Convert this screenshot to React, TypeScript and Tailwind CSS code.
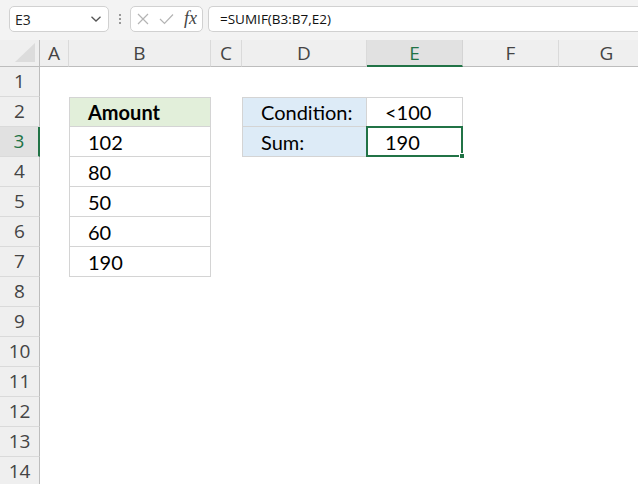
import React from 'react';

const COLS = ['A', 'B', 'C', 'D', 'E', 'F', 'G'];
const ROWS = Array.from({ length: 14 }, (_, i) => i + 1);

type Cell = { text?: string; cls?: string; bold?: boolean; selected?: boolean };

const LINE = 'border-[#d4d4d4]';

// only the cells that hold something or carry a border
const cells: Record<string, Cell> = {
  B2: { text: 'Amount', bold: true, cls: `bg-[#e2efda] border ${LINE}` },
  B3: { text: '102', cls: `border-x border-b ${LINE}` },
  B4: { text: '80', cls: `border-x border-b ${LINE}` },
  B5: { text: '50', cls: `border-x border-b ${LINE}` },
  B6: { text: '60', cls: `border-x border-b ${LINE}` },
  B7: { text: '190', cls: `border-x border-b ${LINE}` },
  D2: { text: 'Condition:', cls: `bg-[#ddebf7] border ${LINE}` },
  E2: { text: '<100', cls: `border-y border-r ${LINE}` },
  D3: { text: 'Sum:', cls: `bg-[#ddebf7] border-x border-b ${LINE}` },
  E3: { text: '190', cls: `border-r border-b ${LINE}`, selected: true },
};

const NameBox = () => (
  <div className="w-[100px] h-[26px] bg-white border border-[#d1d1d1] rounded-[5px] flex items-center justify-between pl-[5px] pr-[6px]">
    <span className="text-[14px] text-[#222]">E3</span>
    <svg width="12" height="8" viewBox="0 0 12 8" fill="none" stroke="#555" strokeWidth="1.3">
      <path d="M1.5 1.8 L6 6 L10.5 1.8" />
    </svg>
  </div>
);

const FxBox = () => (
  <div className="w-[73px] h-[26px] bg-white border border-[#d1d1d1] rounded-[5px] flex items-center pl-[6px] gap-[10px]">
    <svg width="12" height="12" viewBox="0 0 12 12" stroke="#b4b4b4" strokeWidth="1.2">
      <path d="M1 1 L11 11 M11 1 L1 11" />
    </svg>
    <svg width="15" height="12" viewBox="0 0 15 12" fill="none" stroke="#b4b4b4" strokeWidth="1.2">
      <path d="M1 6 L5.5 10.5 L14 1.5" />
    </svg>
    <span className="text-[18px] italic text-[#444] font-['Liberation_Serif',serif] leading-none -mt-[2px]">
      fx
    </span>
  </div>
);

const Toolbar = () => (
  <div className="h-[40px] bg-[#f3f3f3] flex items-start pt-[6px] pl-[9px] font-['Open_Sans',sans-serif]">
    <NameBox />
    <div className="w-[21px] h-[26px] flex flex-col items-center justify-center gap-[2px]">
      <span className="w-[2px] h-[2px] bg-[#999]" />
      <span className="w-[2px] h-[2px] bg-[#999]" />
      <span className="w-[2px] h-[2px] bg-[#999]" />
    </div>
    <FxBox />
    <div className="ml-[5px] flex-1 h-[26px] bg-white border border-[#d1d1d1] border-r-0 rounded-l-[5px] flex items-center pl-[11px]">
      <span className="text-[13.5px] text-[#111]">=SUMIF(B3:B7,E2)</span>
    </div>
  </div>
);

const Corner = () => (
  <div className="relative bg-[#efefef] border-r border-b border-[#bdbdbd]">
    <div className="absolute right-[4px] bottom-[4px] w-0 h-0 border-l-[20px] border-l-transparent border-b-[19px] border-b-[#dcdcdc]" />
  </div>
);

const ColHeader = ({ name }: { name: string }) => {
  const active = name === 'E';
  return (
    <div
      className={
        active
          ? 'bg-[#e1e1e1] border-r border-[#d4d4d4] border-b-2 border-b-[#217346] text-[#217346] flex items-center justify-center'
          : 'bg-[#efefef] border-r border-[#dadada] border-b border-b-[#bdbdbd] text-[#444] flex items-center justify-center'
      }
    >
      <span className="text-[19px] leading-none pt-[1px]">{name}</span>
    </div>
  );
};

const RowHeader = ({ n }: { n: number }) => {
  const active = n === 3;
  return (
    <div
      className={
        active
          ? 'bg-[#e1e1e1] border-r-2 border-[#217346] border-b border-b-[#dadada] text-[#217346] flex items-center justify-center'
          : 'bg-[#efefef] border-r border-[#bdbdbd] border-b border-b-[#dadada] text-[#444] flex items-center justify-center'
      }
    >
      <span className="text-[19px] leading-none">{n}</span>
    </div>
  );
};

const SheetCell = ({ id }: { id: string }) => {
  const c = cells[id];
  if (!c) return <div />;
  return (
    <div className={`relative flex items-center pl-[18px] font-['Lato',sans-serif] text-[20px] text-black ${c.cls ?? ''}`}>
      <span className={c.bold ? 'font-bold' : ''}>{c.text}</span>
      {c.selected && (
        <>
          <div className="absolute -top-[1px] -left-[1px] -right-[1px] -bottom-[1px] border-2 border-[#217346]" />
          <div className="absolute -right-[3px] -bottom-[3px] w-[6px] h-[6px] bg-[#217346] border border-white" />
        </>
      )}
    </div>
  );
};

export default function App() {
  return (
    <div className="w-[638px] h-[484px] overflow-hidden bg-white">
      <Toolbar />
      <div className="grid grid-cols-[40px_29px_142px_31px_125px_96px_96px_96px] grid-rows-[27px] auto-rows-[30px] font-['Open_Sans',sans-serif]">
        <Corner />
        {COLS.map((c) => (
          <ColHeader key={c} name={c} />
        ))}
        {ROWS.map((r) => (
          <React.Fragment key={r}>
            <RowHeader n={r} />
            {COLS.map((c) => (
              <SheetCell key={c + r} id={c + r} />
            ))}
          </React.Fragment>
        ))}
      </div>
    </div>
  );
}
